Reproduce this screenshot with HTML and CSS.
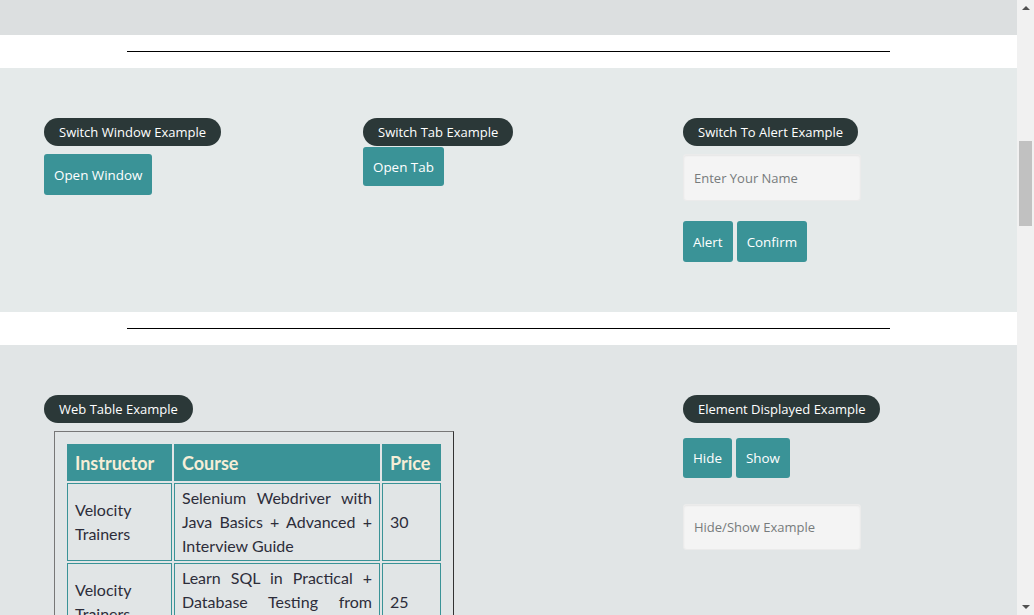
FILE: index.html
```html
<!DOCTYPE html>
<html lang="en">
<head>
<meta charset="utf-8">
<title>Practice Page</title>
<link rel="stylesheet" href="styles.css">
</head>
<body>
<div class="page">
  <div class="band-top"></div>
  <div class="divider"><div class="rule"></div></div>

  <section class="section s1">
    <div class="grid">
      <div class="col">
        <span class="badge">Switch Window Example</span>
        <div class="stack gap8">
          <button class="btn btn-lg">Open Window</button>
        </div>
      </div>
      <div class="col">
        <span class="badge">Switch Tab Example</span>
        <div class="stack gap1">
          <button class="btn btn-tab">Open Tab</button>
        </div>
      </div>
      <div class="col">
        <span class="badge">Switch To Alert Example</span>
        <div class="stack gap8">
          <input class="field" type="text" placeholder="Enter Your Name">
        </div>
        <div class="btn-row gap20">
          <button class="btn btn-lg">Alert</button>
          <button class="btn btn-lg">Confirm</button>
        </div>
      </div>
    </div>
  </section>

  <div class="divider"><div class="rule"></div></div>

  <section class="section s2">
    <div class="grid">
      <div class="col span2">
        <span class="badge">Web Table Example</span>
        <div class="table-box">
          <table class="courses">
            <colgroup>
              <col class="c1"><col class="c2"><col class="c3">
            </colgroup>
            <thead>
              <tr><th>Instructor</th><th>Course</th><th>Price</th></tr>
            </thead>
            <tbody>
              <tr>
                <td>Velocity Trainers</td>
                <td class="just">Selenium Webdriver with Java Basics + Advanced + Interview Guide</td>
                <td>30</td>
              </tr>
              <tr>
                <td>Velocity Trainers</td>
                <td class="just">Learn SQL in Practical + Database Testing from Scratch</td>
                <td>25</td>
              </tr>
            </tbody>
          </table>
        </div>
      </div>
      <div class="col">
        <span class="badge">Element Displayed Example</span>
        <div class="btn-row gap15">
          <button class="btn btn-md">Hide</button>
          <button class="btn btn-md">Show</button>
        </div>
        <div class="stack gap26">
          <input class="field field-2" type="text" placeholder="Hide/Show Example">
        </div>
      </div>
    </div>
  </section>
</div>
<div class="scrollbar">
  <div class="arrow up"></div>
  <div class="thumb"></div>
  <div class="track-fill"></div>
  <div class="arrow down"></div>
</div>
</body>
</html>
```

FILE: styles.css
```css
html, body {
  margin: 0;
  padding: 0;
  height: 615px;
  overflow: hidden;
}
body {
  display: flex;
  font-family: "Open Sans", "Noto Sans", sans-serif;
}
.page {
  flex: 1;
  min-width: 0;
  display: flex;
  flex-direction: column;
  height: 615px;
  overflow: hidden;
}
.band-top {
  height: 35px;
  background: #dcdfe0;
  flex: none;
}
.divider {
  flex: none;
  height: 33px;
  background: #ffffff;
  padding: 16px 127px 0 127px;
  box-sizing: border-box;
}
.rule {
  height: 1px;
  background: #000;
}
.section {
  flex: none;
  padding-top: 50px;
  box-sizing: border-box;
}
.s1 {
  background: #e5eaea;
  height: 244px;
}
.s2 {
  background: #e1e5e6;
  flex: 1;
}
.grid {
  display: grid;
  grid-template-columns: 319px 320px 1fr;
  padding-left: 44px;
}
.span2 {
  grid-column: span 2;
}
.col {
  display: flex;
  flex-direction: column;
  align-items: flex-start;
}
.badge {
  display: inline-block;
  height: 28px;
  line-height: 28px;
  padding: 0 15px 0 15px;
  border-radius: 14px;
  background: #2b3838;
  color: #ffffff;
  font-size: 13px;
  white-space: nowrap;
}
.stack { display: flex; flex-direction: column; align-items: flex-start; }
.gap8 { margin-top: 8px; }
.gap1 { margin-top: 1px; }
.gap15 { margin-top: 15px; }
.gap20 { margin-top: 20px; }
.gap26 { margin-top: 26px; }
.btn-row {
  display: flex;
  gap: 4px;
}
.btn {
  font-family: "Open Sans", "Noto Sans", sans-serif;
  font-size: 13.4px;
  color: #ffffff;
  background: #3a9397;
  border: none;
  border-radius: 3px;
  padding: 0 10px;
  margin: 0;
  cursor: pointer;
}
.btn-lg { height: 41px; }
.btn-md { height: 40px; }
.btn-tab { height: 39px; }
.field {
  width: 178px;
  height: 47px;
  box-sizing: border-box;
  background: #f4f4f4;
  border: 1px solid #ebebeb;
  border-radius: 3px;
  box-shadow: inset 0 1px 2px rgba(0,0,0,0.06);
  padding: 0 10px;
  font-family: "Open Sans", "Noto Sans", sans-serif;
  font-size: 13px;
  color: #333;
  outline: none;
}
.field-2 { height: 46px; }
.field::placeholder {
  color: #777b7c;
}
.table-box {
  margin: 8px 0 0 10px;
  width: 400px;
  box-sizing: border-box;
  border-top: 1px solid #777;
  border-left: 1px solid #777;
  border-right: 1px solid #333;
  padding: 10px 10px 0 10px;
}
.courses {
  border-spacing: 2px;
  table-layout: fixed;
  width: 378px;
  font-family: "Lato", "Noto Sans", sans-serif;
}
.c1 { width: 105px; }
.c2 { width: 206px; }
.c3 { width: 59px; }
.courses th {
  background: #3a9397;
  color: #f6eed7;
  font-size: 18px;
  font-weight: bold;
  text-align: left;
  height: 37px;
  padding: 0 7px;
  box-sizing: border-box;
  border: 1px solid #3a9397;
}
.courses td {
  border: 1px solid #3a9397;
  padding: 2px 7px 2px 7px;
  font-size: 16px;
  line-height: 24px;
  color: #2d2d3a;
  vertical-align: middle;
}
.courses td.just {
  text-align: justify;
}
.scrollbar {
  flex: none;
  width: 17px;
  height: 615px;
  background: #f1f1f1;
  display: flex;
  flex-direction: column;
  align-items: center;
}
.arrow {
  width: 0;
  height: 0;
  border-left: 4px solid transparent;
  border-right: 4px solid transparent;
  flex: none;
}
.arrow.up {
  border-bottom: 4px solid #505050;
  margin-top: 6px;
}
.arrow.down {
  border-top: 4px solid #505050;
  margin-bottom: 6px;
}
.thumb {
  flex: none;
  width: 13px;
  height: 85px;
  margin-top: 131px;
  background: #c1c1c1;
}
.track-fill { flex: 1; }
```
